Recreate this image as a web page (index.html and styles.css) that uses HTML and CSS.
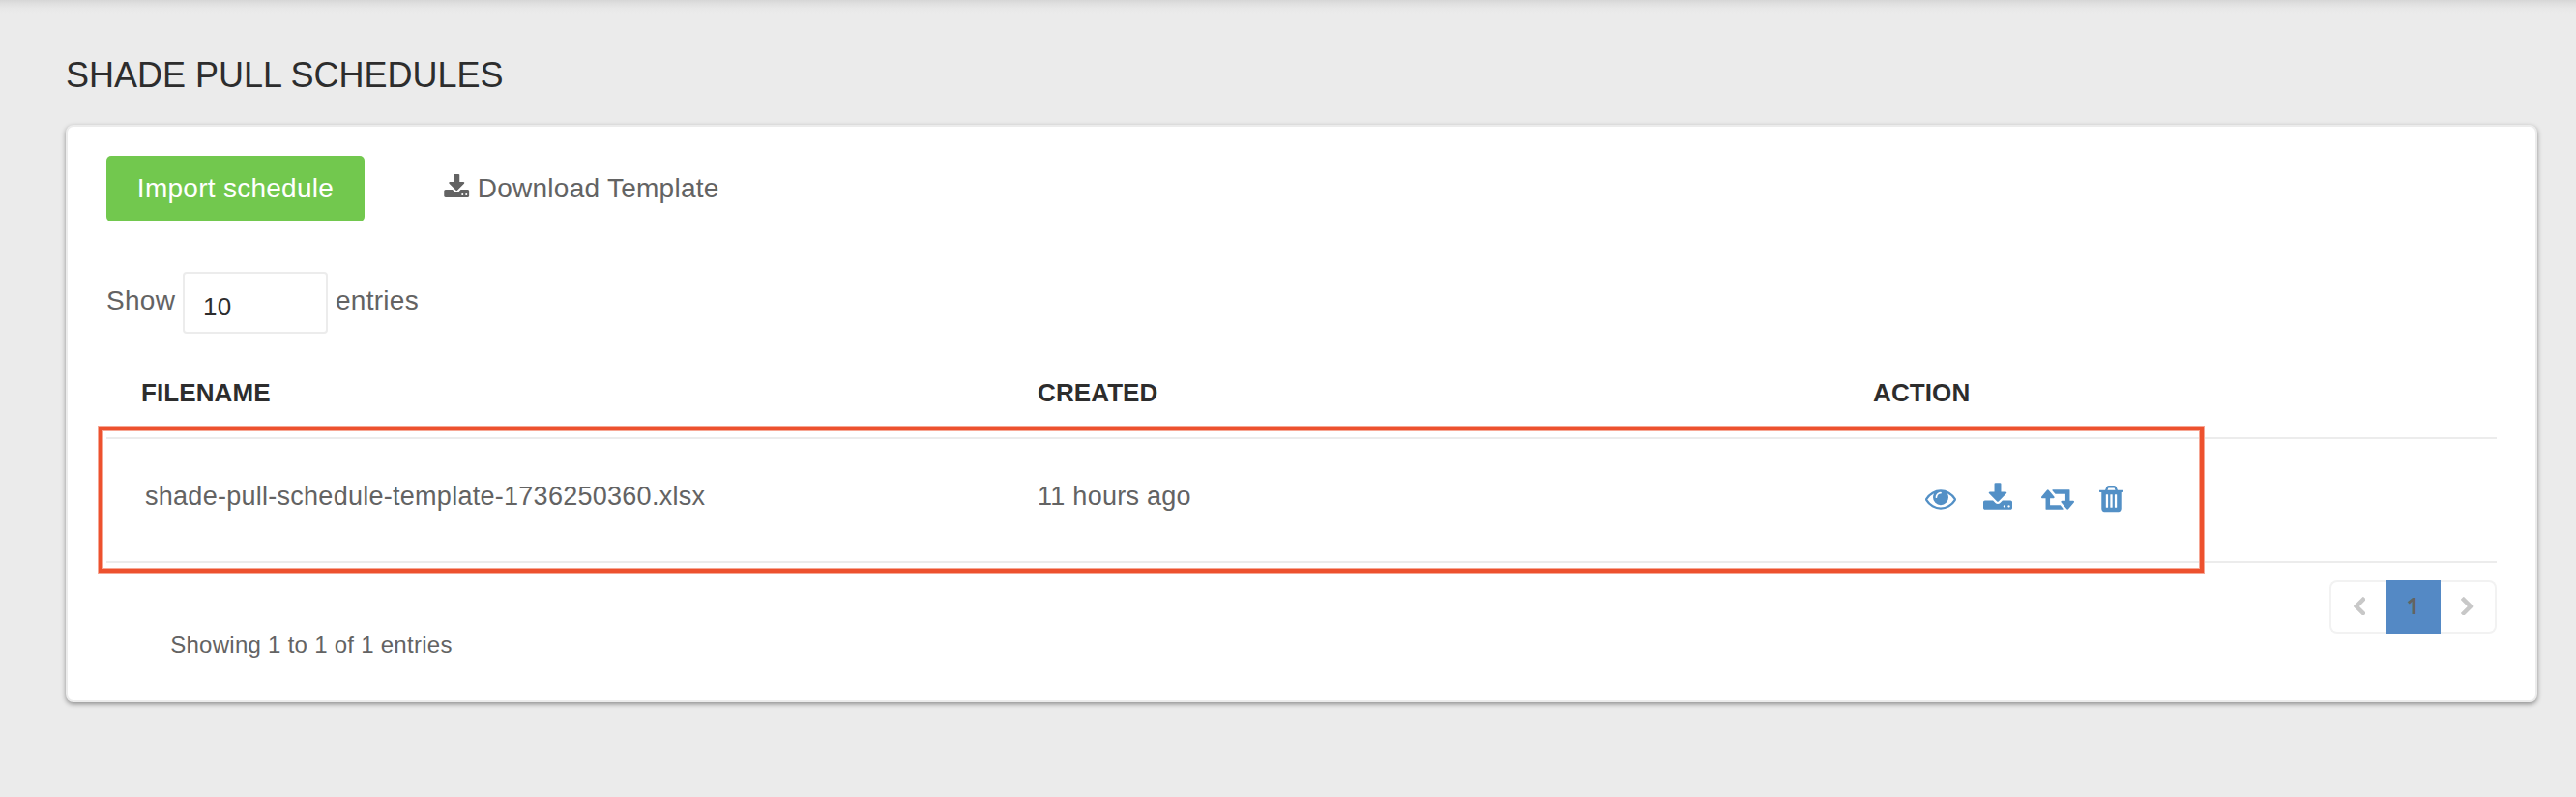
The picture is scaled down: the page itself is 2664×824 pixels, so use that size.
FILE: index.html
```
<!DOCTYPE html>
<html lang="en">
<head>
<meta charset="utf-8">
<title>Shade Pull Schedules</title>
<link rel="stylesheet" href="styles.css">
</head>
<body>
<svg class="defs" aria-hidden="true">
  <symbol id="download" viewBox="64 0 1664 1536"><path d="M1344 1344q0-26-19-45t-45-19-45 19-19 45 19 45 45 19 45-19 19-45zm256 0q0-26-19-45t-45-19-45 19-19 45 19 45 45 19 45-19 19-45zm128-224v320q0 40-28 68t-68 28h-1472q-40 0-68-28t-28-68v-320q0-40 28-68t68-28h465l135 136q58 56 136 56t136-56l136-136h464q40 0 68 28t28 68zm-325-569q17 41-14 70l-448 448q-18 19-45 19t-45-19l-448-448q-31-29-14-70 17-39 59-39h256v-448q0-26 19-45t45-19h256q26 0 45 19t19 45v448h256q42 0 59 39z"/></symbol>
  <symbol id="eye" viewBox="0 384 1792 1152"><path d="M1664 960q-152-236-381-353 61 104 61 225 0 185-131.500 316.500t-316.500 131.500-316.500-131.500-131.500-316.500q0-121 61-225-229 117-381 353 133 205 333.500 326.500t434.500 121.500 434.500-121.500 333.500-326.500zm-720-384q0-20-14-34t-34-14q-125 0-214.500 89.500t-89.500 214.500q0 20 14 34t34 14 34-14 14-34q0-86 61-147t147-61q20 0 34-14t14-34zm848 384q0 34-20 69-140 230-376.500 368.500t-499.500 138.500-499.500-139-376.500-368q-20-35-20-69t20-69q140-229 376.500-368t499.500-139 499.500 139 376.500 368q20 35 20 69z"/></symbol>
  <symbol id="retweet" viewBox="0 384 1920 1152"><path d="M1280 1504q0 13-9.500 22.500t-22.500 9.500h-960q-8 0-13.500-2t-9-7-5.500-8-3-11.500-1-11.500v-600h-192q-26 0-45-19t-19-45q0-24 15-41l320-384q19-22 49-22t49 22l320 384q15 17 15 41 0 26-19 45t-45 19h-192v384h576q16 0 25 11l160 192q7 10 7 21zm640-416q0 24-15 41l-320 384q-20 23-49 23t-49-23l-320-384q-15-17-15-41 0-26 19-45t45-19h192v-384h-576q-16 0-25-12l-160-192q-7-9-7-20 0-13 9.500-22.500t22.500-9.500h960q8 0 13.500 2t9 7 5.500 8 3 11.500 1 11.500v600h192q26 0 45 19t19 45z"/></symbol>
  <symbol id="trash" viewBox="192 128 1408 1536"><path d="M704 1376v-704q0-14-9-23t-23-9h-64q-14 0-23 9t-9 23v704q0 14 9 23t23 9h64q14 0 23-9t9-23zm256 0v-704q0-14-9-23t-23-9h-64q-14 0-23 9t-9 23v704q0 14 9 23t23 9h64q14 0 23-9t9-23zm256 0v-704q0-14-9-23t-23-9h-64q-14 0-23 9t-9 23v704q0 14 9 23t23 9h64q14 0 23-9t9-23zm-544-992h448l-48-117q-7-9-17-11h-317q-10 2-17 11zm928 32v64q0 14-9 23t-23 9h-96v948q0 83-47 143.500t-113 60.500h-832q-66 0-113-58.500t-47-141.500v-952h-96q-14 0-23-9t-9-23v-64q0-14 9-23t23-9h309l70-167q15-37 54-63t79-26h320q40 0 79 26t54 63l70 167h309q14 0 23 9t9 23z"/></symbol>
  <symbol id="chevron" viewBox="410 26 1036 1612"><path d="M1427 301l-531 531 531 531q19 19 19 45t-19 45l-166 166q-19 19-45 19t-45-19l-742-742q-19-19-19-45t19-45l742-742q19-19 45-19t45 19l166 166q19 19 19 45t-19 45z"/></symbol>
</svg>
<main class="page">
  <h1 class="title">SHADE PULL SCHEDULES</h1>
  <section class="card">
    <div class="toolbar">
      <button class="btn-import">Import schedule</button>
      <a class="download"><svg class="download-icon"><use href="#download"/></svg>Download Template</a>
    </div>
    <div class="length">
      <span class="length-show">Show</span>
      <div class="select">10</div>
      <span class="length-entries">entries</span>
    </div>
    <div class="table">
      <div class="row head">
        <div>FILENAME</div>
        <div>CREATED</div>
        <div>ACTION</div>
      </div>
      <div class="row item">
        <div class="filename">shade-pull-schedule-template-1736250360.xlsx</div>
        <div>11 hours ago</div>
        <div class="actions">
          <svg class="icon-eye"><use href="#eye"/></svg>
          <svg class="icon-download"><use href="#download"/></svg>
          <svg class="icon-retweet"><use href="#retweet"/></svg>
          <svg class="icon-trash"><use href="#trash"/></svg>
        </div>
      </div>
      <div class="highlight"></div>
    </div>
    <div class="footer">
      <div class="info">Showing 1 to 1 of 1 entries</div>
      <nav class="pager">
        <span class="page-btn prev"><svg class="chevron"><use href="#chevron"/></svg></span>
        <span class="page-btn active">1</span>
        <span class="page-btn next"><svg class="chevron flip"><use href="#chevron"/></svg></span>
      </nav>
    </div>
  </section>
</main>
</body>
</html>
```
FILE: styles.css
```
* { box-sizing: border-box; }
body {
  margin: 0;
  background: #ebebeb;
  color: #636363;
  font-family: "Liberation Sans", Arial, Helvetica, sans-serif;
  letter-spacing: 0.27px;
}
svg { display: block; fill: currentColor; flex: none; }
.defs { display: none; }
.page {
  height: 824px;
  padding: 58px 40px 0 68px;
  background: linear-gradient(#d6d6d6, #e0e0e0 4px, #e8e8e8 9px, #ebebeb 14px);
}
.title {
  margin: 0 0 31px;
  font-size: 36px;
  font-weight: 400;
  line-height: 40px;
  letter-spacing: -0.02px;
  color: #2d2d2d;
}
.card {
  height: 597px;
  padding: 30px 40px 0;
  background: #fff;
  border: 2px solid #ececec;
  border-radius: 8px;
  box-shadow: 0 2px 5px rgba(0, 0, 0, 0.4);
}
.toolbar { display: flex; height: 68px; font-size: 28px; line-height: 67px; }
.btn-import {
  width: 267px;
  height: 68px;
  padding: 0 0 1px;
  border: 0;
  border-radius: 5px;
  background: #72c84e;
  color: #fff;
  font: inherit;
  letter-spacing: inherit;
}
.download { display: flex; margin-left: 82px; }
.download-icon { width: 26.500px; height: 24px; margin: 19px 8.200px 0 0; }
.length { display: flex; height: 64px; margin-top: 52px; font-size: 28px; line-height: 59px; }
.length-show { width: 79px; }
.select {
  width: 150px;
  height: 64px;
  margin-right: 8px;
  padding: 8px 0 0 19px;
  border: 2px solid #ececec;
  border-radius: 4px;
  font-size: 26px;
  line-height: 52px;
  color: #2d2d2d;
}
.table { position: relative; }
.row {
  display: grid;
  grid-template-columns: 926px 864px 1fr;
  border-bottom: 2px solid #ececec;
}
.row > div { padding-left: 37px; }
.head {
  height: 109px;
  padding-top: 15px;
  font-size: 26px;
  font-weight: 700;
  line-height: 92px;
  letter-spacing: 0.1px;
  color: #2d2d2d;
}
.head > div:first-child { padding-left: 36px; }
.item { height: 128px; font-size: 27px; line-height: 118px; }
.row > .filename { padding-left: 40px; }
.row > .actions {
  display: flex;
  align-items: flex-end;
  height: 73px;
  padding-left: 91px;
  color: #5390c6;
}
.icon-eye { width: 32px; height: 21px; margin-right: 28px; }
.icon-download { width: 30px; height: 28px; margin-right: 30px; }
.icon-retweet { width: 34px; height: 21px; margin-right: 26px; }
.icon-trash { width: 25px; height: 27.500px; margin-bottom: -2.500px; }
.highlight {
  position: absolute;
  top: 96px;
  left: -8px;
  width: 2177px;
  height: 151px;
  border: 4px solid #ed512e;
  box-shadow: 0 0 0 1px #f6a795, inset 0 0 0 1px #f6a795;
}
.footer { display: flex; justify-content: space-between; }
.info { margin: 66px 0 0 66.200px; font-size: 24px; line-height: 37px; }
.pager { display: flex; height: 55px; margin-top: 18px; }
.page-btn {
  display: flex;
  align-items: center;
  justify-content: center;
  width: 58px;
  border: 2px solid #f2f2f2;
  color: #c8c8c8;
}
.prev { border-right: 0; border-radius: 8px 0 0 8px; padding-left: 2px; }
.next { border-left: 0; border-radius: 0 8px 8px 0; padding-right: 2px; }
.page-btn.active {
  width: 57px;
  padding-bottom: 3px;
  border: 0;
  background: #5489c5;
  color: #636363;
  font: 700 23px/52px "Open Sans", sans-serif;
}
.chevron { width: 12.700px; height: 19.800px; margin-top: -2px; }
.flip { transform: scaleX(-1); }
```
